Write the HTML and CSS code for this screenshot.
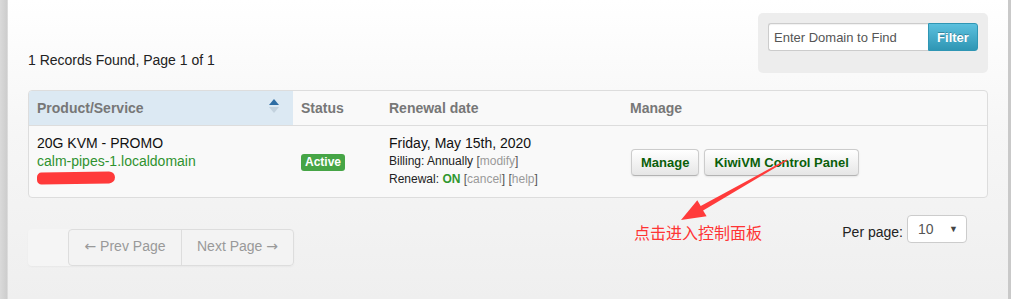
FILE: index.html
```html
<!DOCTYPE html>
<html lang="en">
<head>
<meta charset="utf-8">
<title>Products &amp; Services</title>
<link rel="stylesheet" href="styles.css">
</head>
<body>
<div class="frame">
  <div class="edge-left"></div>
  <main class="main">
    <div class="topbar">
      <div class="records">1 Records Found, Page 1 of 1</div>
      <div class="filterbox">
        <div class="filter-row">
          <input class="filter-input" type="text" placeholder="Enter Domain to Find">
          <button class="filter-btn">Filter</button>
        </div>
      </div>
    </div>

    <table class="services">
      <thead>
        <tr>
          <th class="col-product sorted">Product/Service
            <span class="sort-icon"><span class="sort-up"></span><span class="sort-down"></span></span>
          </th>
          <th class="col-status">Status</th>
          <th class="col-renewal">Renewal date</th>
          <th class="col-manage">Manage</th>
        </tr>
      </thead>
      <tbody>
        <tr>
          <td class="cell-top">
            <div class="line big">20G KVM - PROMO</div>
            <div class="line big"><a class="domain" href="#">calm-pipes-1.localdomain</a></div>
            <div class="line"><span class="scribble"></span></div>
          </td>
          <td class="cell-mid"><span class="label-active">Active</span></td>
          <td class="cell-top">
            <div class="line big">Friday, May 15th, 2020</div>
            <div class="line small">Billing: Annually <span class="br">[</span><a class="sublink" href="#">modify</a><span class="br">]</span></div>
            <div class="line small">Renewal: <b class="on">ON</b> <span class="br">[</span><a class="sublink" href="#">cancel</a><span class="br">]</span> <span class="br">[</span><a class="sublink" href="#">help</a><span class="br">]</span></div>
          </td>
          <td class="cell-mid">
            <div class="btn-row">
              <button class="btn">Manage</button>
              <button class="btn">KiwiVM Control Panel</button>
            </div>
          </td>
        </tr>
      </tbody>
    </table>

    <div class="bottombar">
      <div class="pager-wrap">
        <div class="pager">
          <span class="page-btn"><span class="arr">&larr;</span> Prev Page</span>
          <span class="page-btn">Next Page <span class="arr">&rarr;</span></span>
        </div>
      </div>
      <div class="perpage">
        <span class="perpage-label">Per page:</span>
        <span class="select"><span>10</span><span class="caret">&#9660;</span></span>
      </div>
    </div>
  </main>
  <div class="edge-right"></div>

  <div class="annot">点击进入控制面板</div>
  <svg class="arrow" width="1011" height="299" viewBox="0 0 1011 299">
    <polygon points="787.4,160.5 703.1,210.4 706.6,216.3 681,220 697.3,200.2 700.7,206.0 786.6,159.4" fill="#ff3b3b"/>
  </svg>
</div>
</body>
</html>
```

FILE: styles.css
```css
* { box-sizing: border-box; }

html, body {
  margin: 0;
  padding: 0;
}

body {
  font-family: "Liberation Sans", Arial, sans-serif;
  font-size: 14px;
  color: #222;
  background: #f1f1f1;
}

.frame {
  position: relative;
  display: flex;
  width: 1011px;
  height: 299px;
  overflow: hidden;
}

.edge-left {
  width: 8px;
  background: linear-gradient(to right, #dadada, #cdcdcd 85%, #e6e6e6);
}

.edge-right {
  width: 3px;
  background: #c9c9c9;
}

.main {
  flex: 1;
  background: linear-gradient(to bottom, #ffffff 0%, #f6f6f6 45%, #efefef 100%);
  padding: 13px 20px 0 20px;
}

/* top bar */
.topbar {
  display: flex;
  justify-content: space-between;
  align-items: flex-end;
}

.records {
  line-height: 20px;
  margin-bottom: 3px;
  color: #222;
}

.filterbox {
  width: 230px;
  background: #ededed;
  border-radius: 5px;
  padding: 10px 10px 22px 10px;
}

.filter-row {
  display: flex;
  height: 28px;
}

.filter-input {
  width: 160px;
  height: 28px;
  border: 1px solid #ccc;
  border-right: none;
  border-radius: 3px 0 0 3px;
  background: #fff;
  padding: 0 5px;
  font-family: "Liberation Sans", Arial, sans-serif;
  font-size: 13px;
  color: #555;
  outline: none;
  box-shadow: inset 0 1px 1px rgba(0,0,0,0.06);
}

.filter-input::placeholder {
  color: #555;
}

.filter-btn {
  width: 50px;
  height: 28px;
  border: 1px solid #2f96b4;
  border-radius: 0 3px 3px 0;
  background: linear-gradient(to bottom, #5bc0de, #2f96b4);
  color: #fff;
  font-family: "Liberation Sans", Arial, sans-serif;
  font-size: 13px;
  font-weight: bold;
  text-shadow: 0 -1px 0 rgba(0,0,0,0.25);
  padding: 0;
}

/* table */
.services {
  width: 960px;
  margin-top: 17px;
  border: 1px solid #dddddd;
  border-radius: 4px;
  border-spacing: 0;
  border-collapse: separate;
  background: #f9f9f9;
  table-layout: fixed;
}

.services th {
  text-align: left;
  font-weight: bold;
  color: #777;
  font-size: 14px;
  line-height: 34px;
  padding: 0 8px;
  border-bottom: 1px solid #dddddd;
}

.col-product { width: 264px; }
.col-status { width: 88px; }
.col-renewal { width: 241px; }

th.sorted {
  position: relative;
  background: #dce9f3;
  border-top-left-radius: 3px;
}

.sort-icon {
  position: absolute;
  right: 14px;
  top: 8px;
  width: 10px;
  height: 16px;
  display: flex;
  flex-direction: column;
  align-items: center;
  gap: 2px;
}

.sort-up {
  width: 0;
  height: 0;
  border-left: 5px solid transparent;
  border-right: 5px solid transparent;
  border-bottom: 6px solid #2e6da4;
}

.sort-down {
  width: 0;
  height: 0;
  border-left: 5px solid transparent;
  border-right: 5px solid transparent;
  border-top: 6px solid #c3d2de;
}

.services td {
  padding: 8px 8px 7px 8px;
}

.cell-top { vertical-align: top; }
.cell-mid { vertical-align: middle; }

.line {
  height: 18px;
  line-height: 18px;
  white-space: nowrap;
}

.line.big { font-size: 14px; color: #111; }
.line.small { font-size: 12px; color: #222; }

.domain {
  color: #2f922f;
  text-decoration: none;
}

.scribble {
  display: block;
  width: 78px;
  height: 12px;
  margin-top: 2px;
  border-radius: 6px 8px 8px 6px;
  background: #ff3a3a;
  transform: rotate(-1deg);
}

.br { color: #555; }

.sublink {
  color: #999;
  text-decoration: none;
}

.on { color: #2f972f; }

.label-active {
  display: inline-block;
  background: #46a546;
  color: #fff;
  font-size: 12px;
  font-weight: bold;
  line-height: 17px;
  padding: 0 4px;
  border-radius: 3px;
  margin-top: 1px;
}

.btn-row {
  display: flex;
  gap: 5px;
  padding-left: 1px;
}

.btn {
  height: 27px;
  padding: 0 9px;
  border: 1px solid #cccccc;
  border-bottom-color: #b3b3b3;
  border-radius: 4px;
  background: linear-gradient(to bottom, #ffffff, #e6e6e6);
  box-shadow: inset 0 1px 0 rgba(255,255,255,0.2), 0 1px 2px rgba(0,0,0,0.08);
  color: #0a5f0a;
  font-family: "Liberation Sans", Arial, sans-serif;
  font-size: 13px;
  font-weight: bold;
  margin-top: 1px;
}

/* bottom */
.bottombar {
  display: flex;
  justify-content: space-between;
  align-items: flex-start;
  margin-top: 17px;
}

.pager-wrap {
  margin-top: 14px;
  padding-left: 40px;
  background: #f5f5f5;
  border-radius: 4px;
  box-shadow: 0 1px 2px rgba(0,0,0,0.04);
}

.pager {
  display: flex;
  border: 1px solid #dddddd;
  border-radius: 4px;
  background: #f3f3f3;
}

.page-btn {
  width: 112px;
  height: 35px;
  line-height: 33px;
  text-align: center;
  color: #999;
  font-size: 14px;
}

.arr {
  font-family: "DejaVu Sans", sans-serif;
  font-size: 14px;
}

.page-btn + .page-btn {
  border-left: 1px solid #dddddd;
}

.perpage {
  display: flex;
  align-items: center;
  gap: 4px;
  margin-right: 21px;
}

.perpage-label {
  font-size: 14px;
  color: #222;
  margin-top: 6px;
}

.select {
  display: flex;
  justify-content: space-between;
  align-items: center;
  width: 60px;
  height: 28px;
  padding: 0 8px 0 10px;
  border: 1px solid #cccccc;
  border-radius: 4px;
  background: #fff;
  font-size: 14px;
  color: #555;
}

.caret {
  font-size: 9px;
  color: #444;
}

/* annotation overlay */
.annot {
  position: absolute;
  left: 634px;
  top: 221px;
  font-family: "Noto Sans CJK SC", sans-serif;
  font-size: 16px;
  line-height: 22px;
  color: #ff3434;
}

.arrow {
  position: absolute;
  left: 0;
  top: 0;
  pointer-events: none;
}
```
